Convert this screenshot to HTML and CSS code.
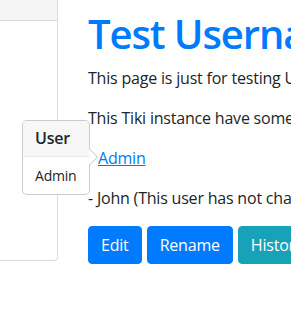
FILE: index.html
```html
<!DOCTYPE html>
<html lang="en">
<head>
  <meta charset="UTF-8">
  <title>Test Username</title>
  <link rel="stylesheet" href="styles.css">
</head>
<body>
  <div class="page">
    <!-- Side panel -->
    <aside class="side">
      <div class="side-header"></div>
    </aside>

    <!-- Wiki page -->
    <main class="content">
      <h1 class="page-title">Test Username</h1>
      <p>This page is just for testing UserPageNotification.</p>
      <p>This Tiki instance have some users:</p>
      <p class="user-link"><a href="#admin">Admin</a></p>
      <p>- John (This user has not changed his password yet)</p>
      <div class="actions">
        <a href="#edit" class="btn btn-primary">Edit</a>
        <a href="#rename" class="btn btn-primary">Rename</a>
        <a href="#history" class="btn btn-info">History</a>
      </div>
    </main>
  </div>

  <!-- Popover for the Admin link -->
  <div class="popover">
    <h3 class="popover-header">User</h3>
    <div class="popover-body">Admin</div>
    <span class="popover-arrow"></span>
  </div>
</body>
</html>
```

FILE: styles.css
```css
* {
  margin: 0;
  padding: 0;
  box-sizing: border-box;
}

body {
  font-family: "Open Sans", "Noto Sans", sans-serif;
  font-size: 16px;
  line-height: 1.5;
  letter-spacing: -0.2px;
  color: #212529;
  background-color: #fff;
  overflow: hidden;
}

.page {
  display: flex;
  align-items: flex-start;
}

/* Side panel */
.side {
  flex: 0 0 58px;
  height: 261px;
  border-right: 1px solid #dcdcdc;
  border-bottom: 1px solid #dcdcdc;
  border-bottom-right-radius: 4px;
}
.side-header {
  height: 21px;
  background-color: #f5f5f5;
  border-bottom: 1px solid #dcdcdc;
}

/* Content */
.content {
  padding: 10px 0 0 30px;
  white-space: nowrap;
  overflow: hidden;
  min-width: 0;
}
.page-title {
  font-size: 40px;
  font-weight: 600;
  line-height: 1.2;
  letter-spacing: -1.1px;
  color: #007bff;
  margin-bottom: 8px;
}
.content p {
  margin-bottom: 16px;
}
.content a {
  color: #007bff;
}
.content .user-link {
  padding-left: 10px;
}

.actions {
  display: flex;
  gap: 5px;
}
.btn {
  display: inline-block;
  padding: 6px 12px;
  border: 1px solid transparent;
  border-radius: 4px;
  text-decoration: none;
  line-height: 1.5;
}
.content .btn {
  color: #fff;
}
.btn-primary {
  background-color: #007bff;
  border-color: #007bff;
}
.btn-info {
  background-color: #17a2b8;
  border-color: #17a2b8;
}

/* Popover */
.popover {
  position: absolute;
  left: 22px;
  top: 120px;
  font-size: 14px;
  line-height: 1.5;
  background-color: #fff;
  border: 1px solid rgba(0, 0, 0, 0.2);
  border-radius: 5px;
}
.popover-header {
  font-size: 16px;
  font-weight: 600;
  line-height: 1.2;
  padding: 8px 12px;
  background-color: #f7f7f7;
  border-bottom: 1px solid #ebebeb;
  border-radius: 4px 4px 0 0;
}
.popover-body {
  padding: 8px 12px;
}
.popover-arrow {
  position: absolute;
  top: 28px;
  right: -9px;
  width: 8px;
  height: 16px;
}
.popover-arrow::before,
.popover-arrow::after {
  content: '';
  position: absolute;
  top: 0;
  border-style: solid;
  border-width: 8px 0 8px 8px;
  border-color: transparent;
}
.popover-arrow::before {
  right: 0;
  border-left-color: rgba(0, 0, 0, 0.25);
}
.popover-arrow::after {
  right: 1px;
  border-left-color: #fff;
}
```
